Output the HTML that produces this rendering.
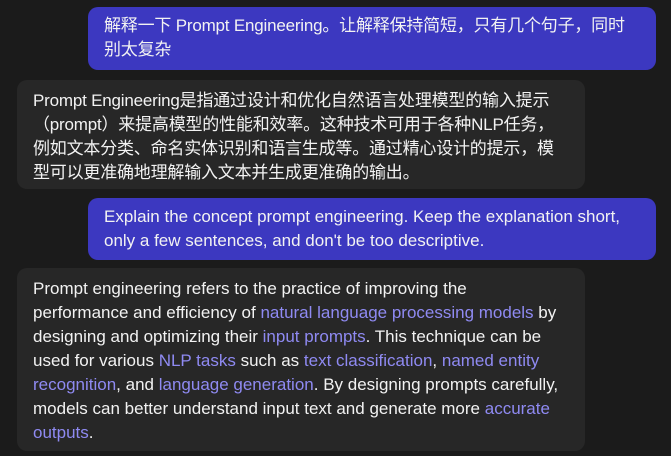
<!DOCTYPE html>
<html><head><meta charset="utf-8"><style>
html,body{margin:0;padding:0;width:671px;height:456px;overflow:hidden;background:#1b1b1b;}
body{font-family:"Liberation Sans","Noto Sans CJK SC",sans-serif;font-size:17px;color:#f2f2f2;position:relative;}
.b{position:absolute;border-radius:10px;box-sizing:border-box;line-height:24px;white-space:nowrap;}
.u{background:#3c38c0;left:88px;width:568px;padding:7px 0 0 16px;}
.a{background:#272727;left:17px;width:568px;padding:9px 0 0 16px;}
a{color:#8f8af2;text-decoration:none;}
.cjk{font-size:17px;letter-spacing:-0.2px;}
</style></head><body>
<div class="b u cjk" style="top:7px;height:63px;">解释一下 Prompt Engineering。让解释保持简短，只有几个句子，同时<br>别太复杂</div>
<div class="b a cjk" style="top:80px;height:109px;">Prompt Engineering是指通过设计和优化自然语言处理模型的输入提示<br>（prompt）来提高模型的性能和效率。这种技术可用于各种NLP任务，<br>例如文本分类、命名实体识别和语言生成等。通过精心设计的提示，模<br>型可以更准确地理解输入文本并生成更准确的输出。</div>
<div class="b u" style="top:198px;height:62px;">Explain the concept prompt engineering. Keep the explanation short,<br>only a few sentences, and don't be too descriptive.</div>
<div class="b a" style="top:268px;height:183px;">Prompt engineering refers to the practice of improving the<br>performance and efficiency of <a>natural language processing models</a> by<br>designing and optimizing their <a>input prompts</a>. This technique can be<br>used for various <a>NLP tasks</a> such as <a>text classification</a>, <a>named entity</a><br><a>recognition</a>, and <a>language generation</a>. By designing prompts carefully,<br>models can better understand input text and generate more <a>accurate</a><br><a>outputs</a>.</div>
</body></html>
